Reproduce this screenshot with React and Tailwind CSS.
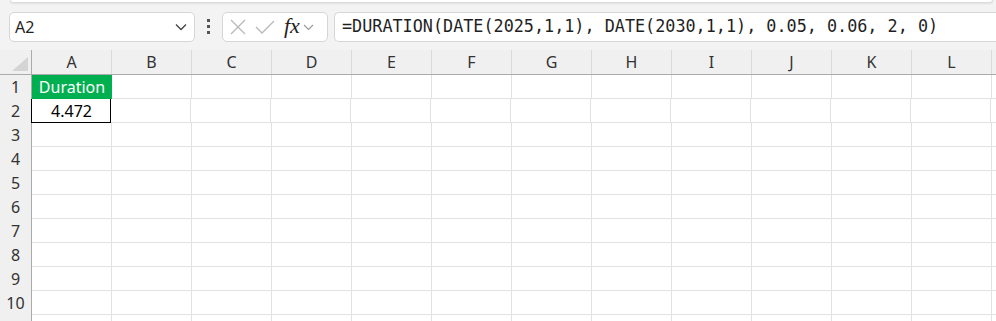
import React from 'react';

const COLS = ['A', 'B', 'C', 'D', 'E', 'F', 'G', 'H', 'I', 'J', 'K', 'L', ''];
const ROWS = [1, 2, 3, 4, 5, 6, 7, 8, 9, 10, ''];

const Chevron = ({ className = '' }) => (
  <svg width="12" height="8" viewBox="0 0 12 8" className={className}>
    <path d="M1 1.5 L6 6.5 L11 1.5" fill="none" stroke="currentColor" strokeWidth="1.3" />
  </svg>
);

const Cell = ({ col, row }) => {
  if (col === 'A' && row === 1) {
    return (
      <div className="w-[80px] shrink-0 h-full bg-[#00b050] text-white flex items-center justify-center border-b border-[#00b050]">
        Duration
      </div>
    );
  }
  if (col === 'A' && row === 2) {
    return (
      <div className="w-[80px] shrink-0 h-full flex items-center justify-center border-x border-b border-black -ml-px pl-px text-black">
        4.472
      </div>
    );
  }
  return <div className="w-[80px] shrink-0 h-full border-r border-b border-[#e1e1e1]" />;
};

export default function App() {
  return (
    <div className="w-[996px] h-[321px] overflow-hidden bg-[#f3f3f3] font-['Segoe_UI','Noto_Sans',sans-serif] text-[16px] text-[#1f1f1f]">
      {/* ribbon edge */}
      <div className="ml-[10px] mr-[3px] h-[3px] bg-white border border-t-0 border-[#dcdcdc] rounded-b-[5px] shadow-[0_1px_2px_rgba(0,0,0,0.08)]" />

      {/* formula bar row */}
      <div className="flex items-center h-[47px] pl-[9px] pb-[5px] pt-[5px]">
        <div className="w-[186px] h-[30px] bg-white border border-[#d6d6d6] rounded-[5px] flex items-center justify-between pl-[5px] pr-[7px]">
          <span className="text-[16px] text-[#1f1f1f]">A2</span>
          <Chevron className="text-[#444]" />
        </div>
        <div className="w-[27px] flex flex-col items-center gap-[3px]">
          <span className="w-[3px] h-[3px] bg-[#555]" />
          <span className="w-[3px] h-[3px] bg-[#555]" />
          <span className="w-[3px] h-[3px] bg-[#555]" />
        </div>
        <div className="w-[106px] h-[30px] bg-white border border-[#d6d6d6] rounded-[5px] flex items-center pl-[7px]">
          <svg width="16" height="16" viewBox="0 0 16 16">
            <path d="M1 1 L15 15 M15 1 L1 15" stroke="#b8b8b8" strokeWidth="1.3" fill="none" />
          </svg>
          <svg width="20" height="16" viewBox="0 0 20 16" className="ml-[9px]">
            <path d="M1 8 L7 14 L19 2" stroke="#b8b8b8" strokeWidth="1.3" fill="none" />
          </svg>
          <span className="ml-[9px] font-['Liberation_Serif',serif] italic text-[22px] text-[#222] leading-none -mt-[2px]">fx</span>
          <svg width="11" height="8" viewBox="0 0 11 8" className="ml-[3px]">
            <path d="M1 2 L5.5 6.5 L10 2" fill="none" stroke="#999" strokeWidth="1.1" />
          </svg>
        </div>
        <div className="ml-[6px] flex-1 h-[30px] bg-white border border-r-0 border-[#d6d6d6] rounded-l-[5px] flex items-center pl-[7px]">
          <span className="font-['DejaVu_Sans_Mono',monospace] text-[16.8px] text-[#1f1f1f] whitespace-nowrap">
            =DURATION(DATE(2025,1,1), DATE(2030,1,1), 0.05, 0.06, 2, 0)
          </span>
        </div>
      </div>

      {/* grid */}
      <div className="bg-white">
        <div className="flex h-[25px] bg-[#f0f0f0] border-b border-[#ababab]">
          <div className="w-[32px] shrink-0 h-full border-r border-[#ababab] relative">
            <svg width="16" height="14" viewBox="0 0 16 14" className="absolute left-[12px] bottom-[3px]">
              <path d="M16 0 L16 14 L0 14 Z" fill="#d4d4d4" />
            </svg>
          </div>
          {COLS.map((c, i) => (
            <div key={i} className="w-[80px] shrink-0 h-full border-r border-[#dadada] flex items-center justify-center text-[16px] text-[#333]">
              {c}
            </div>
          ))}
        </div>
        {ROWS.map((r, i) => (
          <div key={i} className="flex h-[24px]">
            <div className="w-[32px] shrink-0 h-full bg-[#f0f0f0] border-r border-[#ababab] flex items-center justify-center text-[16px] text-[#333]">
              {r}
            </div>
            {COLS.map((c, j) => (
              <Cell key={j} col={c} row={r} />
            ))}
          </div>
        ))}
      </div>
    </div>
  );
}
